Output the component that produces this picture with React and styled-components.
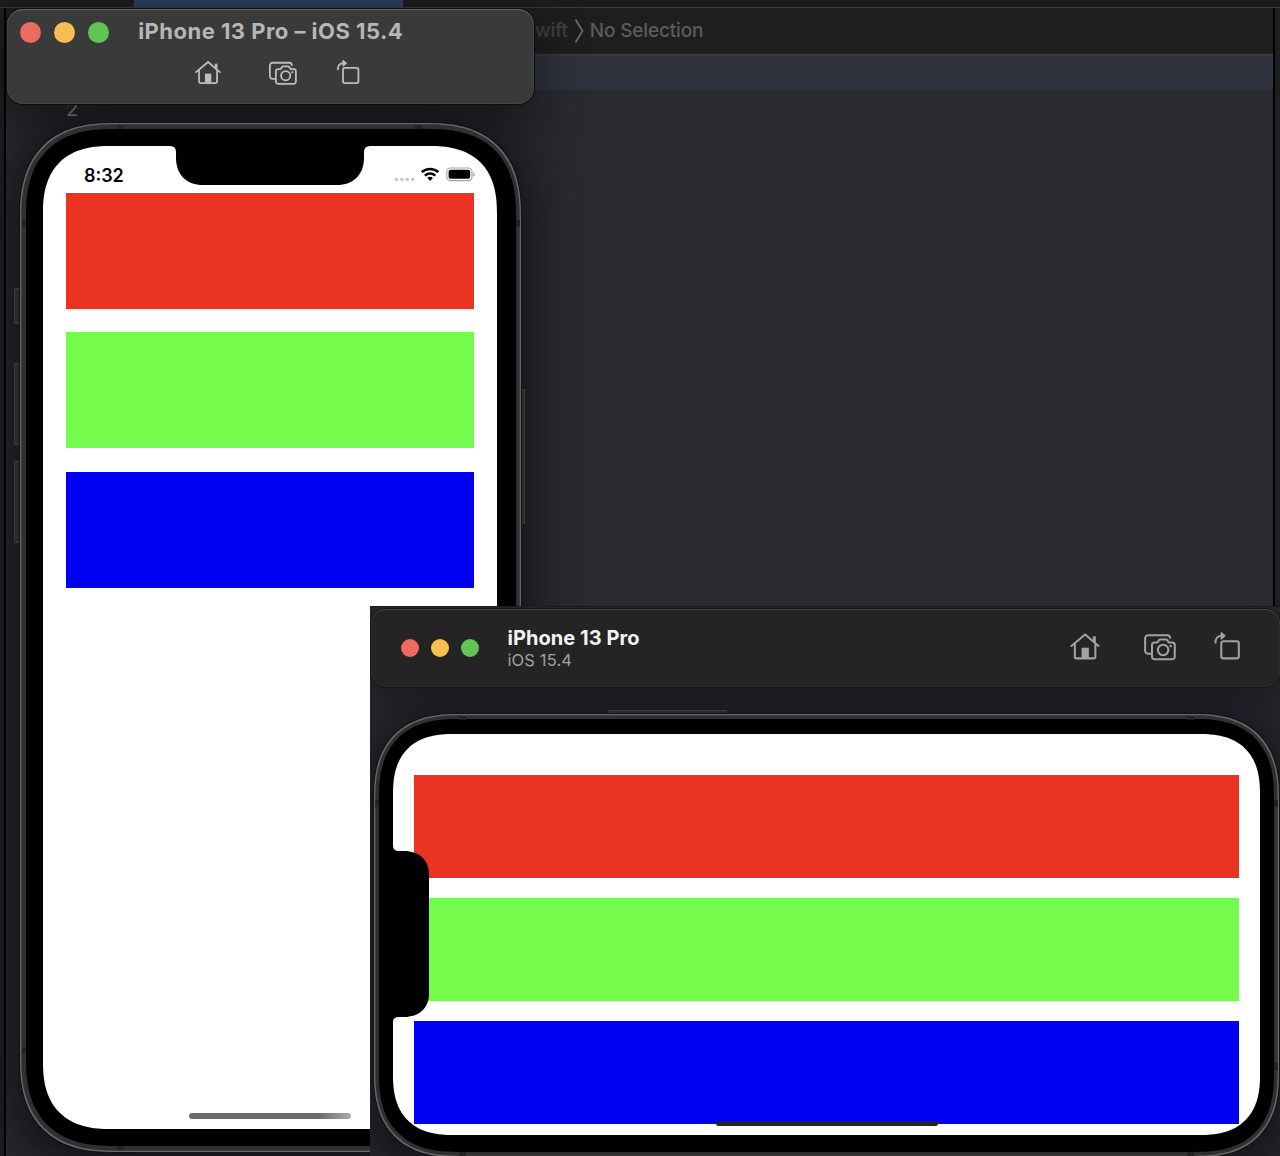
import React from "react";
import styled, { createGlobalStyle, css } from "styled-components";

const GlobalStyle = createGlobalStyle`
  *, *::before, *::after { box-sizing: border-box; }
  body { margin: 0; background: #1e1e1e; font-family: Inter, "Liberation Sans", sans-serif; }
`;

/* Rounded corners with the continuous curvature of a phone body. */
const smoothCorners = css`
  border-radius: ${(p) => p.$radius}px;
  @supports (corner-shape: squircle) {
    border-radius: ${(p) => p.$radius * 1.2}px;
    corner-shape: superellipse(1.3);
  }
`;

const Desktop = styled.main`
  position: relative;
  width: 1280px;
  height: 1156px;
  overflow: hidden;
`;

/* ---------- editor behind the simulators ---------- */

const Editor = styled.section`
  display: grid;
  grid-template-rows: 8px 48px 1fr;
  height: 100%;
`;

const TabStrip = styled.div`
  background: #1c1c1c;
  border-bottom: 1px solid #393939;
  padding-left: 134px;
`;

const ActiveTab = styled.div`
  width: 269px;
  height: 7px;
  background: #2c3e5c;
`;

const Columns = styled.div`
  display: grid;
  grid-template-columns: 4px 1fr 5px;
`;

const Gutter = styled.div`
  background: #1f1f1f;
`;

const JumpBar = styled.div`
  display: flex;
  align-items: flex-start;
  height: 48px;
  padding: 10px 0 0 529px;
  background: #1e1e1e;
  border: solid #000;
  border-width: 0 2px;
  box-shadow: inset 0 -2px #3a3a3a;
  font-size: 19px;
  font-weight: 500;
  line-height: 26px;
`;

const Crumb = styled.span`
  color: ${(p) => (p.$dim ? "#414141" : "#5c5c5c")};
  letter-spacing: -0.17px;
`;

const Separator = styled.svg`
  width: 10px;
  height: 26px;
  margin: 0 6px;
`;

const Code = styled.div`
  display: flex;
  flex-direction: column;
  background: #29292e;
  border: solid #000;
  border-width: 0 2px;
`;

const CurrentLine = styled.div`
  height: 34px;
  background: #2f323c;
`;

const LineNumber = styled.div`
  padding: 7px 0 0 60px;
  color: #a6a6ac;
  font-size: 20px;
  line-height: 24px;
`;

/* ---------- simulator windows ---------- */

const PortraitTitleBar = styled.header`
  position: absolute;
  left: 7px;
  top: 9px;
  width: 527px;
  height: 95px;
  padding: 9px 13.4px 0;
  border-radius: 16px;
  background: #3a3a3b;
  box-shadow: inset 0 1px #626262, inset 0 0 0 1px #434344, 0 0 0 1px #0c0c0d,
    0 16px 44px 4px rgba(8, 8, 14, 0.5);
`;

const TitleRow = styled.div`
  display: flex;
  align-items: center;
  gap: 28.8px;
  height: 27px;
`;

const Lights = styled.div`
  display: flex;
  gap: ${(p) => p.$gap}px;
  padding-top: ${(p) => p.$drop}px;
`;

const Light = styled.i`
  width: ${(p) => p.$size}px;
  height: ${(p) => p.$size}px;
  border-radius: 50%;
  background: ${(p) => p.$color};
`;

const Title = styled.h1`
  margin: 0;
  color: ${(p) => p.$color};
  font-size: ${(p) => p.$size}px;
  font-weight: 700;
  line-height: ${(p) => p.$line}px;
  letter-spacing: ${(p) => p.$track}px;
  white-space: nowrap;
`;

const Subtitle = styled.p`
  margin: 0;
  color: #a0a0a1;
  font-size: 16.5px;
  line-height: 20px;
  letter-spacing: 0.15px;
`;

const Tools = styled.nav`
  display: flex;
  color: ${(p) => p.$color};
  padding: ${(p) => p.$pad};
  gap: ${(p) => p.$gap};
`;

const ToolIcon = styled.svg`
  display: block;
  width: ${(p) => 32 * p.$scale}px;
  height: ${(p) => 28 * p.$scale}px;
  margin-left: ${(p) => p.$shift || 0}px;
  fill: none;
  stroke: currentColor;
  stroke-width: 1.9;
  stroke-linecap: round;
  stroke-linejoin: round;
`;

const placed = css`
  position: absolute;
  left: ${(p) => p.$x}px;
  top: ${(p) => p.$y}px;
  width: ${(p) => p.$w}px;
  height: ${(p) => p.$h}px;
`;

const DeviceShadow = styled.div`
  ${placed}
  border-radius: ${(p) => p.$radius}px;
  box-shadow: 0 10px 44px 14px rgba(8, 8, 14, 0.62);
`;

const Device = styled.article`
  ${placed}
  ${smoothCorners}
  padding: ${(p) => p.$rim}px;
  background: #303032;
  box-shadow: inset 0 0 0 1.3px #666668, 0 0 0 1px #121215;
`;

const Bezel = styled.div`
  ${smoothCorners}
  height: 100%;
  padding: ${(p) => p.$pad};
  background: #000;
`;

const Screen = styled.div`
  ${smoothCorners}
  position: relative;
  display: flex;
  flex-direction: column;
  height: 100%;
  padding: ${(p) => p.$pad};
  background: #fff;
  overflow: hidden;
`;

const StatusBar = styled.div`
  display: flex;
  justify-content: space-between;
  align-items: flex-start;
  height: 47px;
  padding: 18px 0 0 17.5px;
  color: #000;
  font-size: 18px;
  font-weight: 600;
  line-height: 24px;
`;

const StatusIcons = styled.svg`
  width: 82px;
  height: 18px;
  margin: 2px -1.6px 0 0;
`;

const Stack = styled.div`
  display: flex;
  flex-direction: column;
  gap: ${(p) => p.$gap}px;
`;

const Band = styled.div`
  height: ${(p) => p.$h}px;
  background: ${(p) => p.$color};
`;

const Notch = styled.svg`
  ${placed}
`;

const HomeIndicator = styled.div`
  position: absolute;
  left: ${(p) => p.$x}px;
  bottom: ${(p) => p.$bottom}px;
  width: ${(p) => p.$w}px;
  height: ${(p) => p.$h}px;
  border-radius: 3px;
  background: ${(p) => p.$fill};
`;

const SideButton = styled.i`
  ${placed}
  background: #2a2a2c;
  border: solid #3a3a3c;
  border-width: ${(p) => p.$edges};
`;

const AntennaLine = styled.i`
  position: absolute;
  left: ${(p) => p.$x}px;
  top: ${(p) => p.$y}px;
  width: ${(p) => (p.$v ? 4 : 7)}px;
  height: ${(p) => (p.$v ? 7 : 4)}px;
  background: #232324;
`;

const Inset = styled.section`
  position: absolute;
  left: 370px;
  top: 606px;
  width: 910px;
  height: 550px;
  overflow: hidden;
  background: #29292f;
  border-top: 1px solid #1b1b1e;
`;

const LandscapeTitleBar = styled.header`
  display: flex;
  align-items: center;
  position: relative;
  height: 78px;
  margin: 2px 0 0 1px;
  padding: 0 35px 0 30px;
  border-radius: 15px;
  background: #242425;
  box-shadow: inset 0 1px #464648, inset 0 0 0 1px #2b2b2d, 0 0 0 1px #141416,
    0 10px 36px 4px rgba(8, 8, 14, 0.4);
`;

const TitleGroup = styled.div`
  flex: 1;
  margin-left: 28.4px;
`;

function HomeIcon({ scale }) {
  return (
    <ToolIcon $scale={scale} viewBox="0 0 32 28">
      <path d="M3.2 14 16 3.2 28.6 14" />
      <path d="M6.4 12.5V24a1.6 1.6 0 0 0 1.6 1.6h16a1.6 1.6 0 0 0 1.6-1.6V12.5" />
      <path d="M24.6 10.4V5" strokeWidth="2.8" strokeLinecap="butt" />
      <path d="M12.7 15.6h6.8v9.6h-6.8z" fill="currentColor" stroke="none" />
    </ToolIcon>
  );
}

function CameraIcon({ scale, shift }) {
  return (
    <ToolIcon $shift={shift} $scale={scale} viewBox="0 0 32 28">
      <path d="M7.500 21.200H4.800a2.800 2.800 0 0 1-2.800-2.800V6.800A2.800 2.800 0 0 1 4.800 4h18a2.800 2.800 0 0 1 2.600 2.400" />
      <path d="M10.800 10.800h2.600l1.500-2.200a1.800 1.800 0 0 1 1.400-.7h5a1.800 1.800 0 0 1 1.400.7l1.500 2.200h3.100a2.400 2.400 0 0 1 2.400 2.400V24a2.400 2.400 0 0 1-2.400 2.400H10.800A2.400 2.400 0 0 1 8.400 24V13.200a2.400 2.400 0 0 1 2.400-2.400z" />
      <circle cx="18.800" cy="17.800" r="4.900" />
      <circle cx="25.900" cy="14" r="1.200" fill="currentColor" stroke="none" />
    </ToolIcon>
  );
}

function RotateIcon({ scale, shift }) {
  return (
    <ToolIcon $shift={shift} $scale={scale} viewBox="0 0 32 28">
      <rect x="9.600" y="9.500" width="16.400" height="16.100" rx="2" />
      <path d="M4.200 11C4 7.200 6 4.700 9.800 4.500" />
      <path d="M9.600 1.600 13 4.500 9.600 7.400z" fill="currentColor" strokeWidth="1.200" />
    </ToolIcon>
  );
}

const bandColors = ["#ea3323", "#75fb4c", "#0000f5"];
const lightColors = ["#ec6a5e", "#f4bf4f", "#61c454"];

function TrafficLights({ size, gap, drop }) {
  return (
    <Lights $gap={gap} $drop={drop}>
      {lightColors.map((c) => (
        <Light key={c} $size={size} $color={c} />
      ))}
    </Lights>
  );
}

function Bands({ height, gap }) {
  return (
    <Stack $gap={gap}>
      {bandColors.map((c) => (
        <Band key={c} $h={height} $color={c} />
      ))}
    </Stack>
  );
}

function PortraitSimulator() {
  return (
    <>
      <DeviceShadow $x={20} $y={123} $w={501} $h={1029} $radius={78} />
      <PortraitTitleBar>
        <TitleRow>
          <TrafficLights size={21} gap={13} drop={2} />
          <Title $color="#b6b6b7" $size={22} $line={27} $track={0.47}>
            iPhone 13 Pro – iOS 15.4
          </Title>
        </TitleRow>
        <Tools $color="#bdbdbd" $pad="14.4px 0 0 172.8px" $gap="45px">
          <HomeIcon scale={0.94} />
          <CameraIcon scale={0.94} />
          <RotateIcon scale={0.94} shift={-9} />
        </Tools>
      </PortraitTitleBar>
      <SideButton $x={14} $y={288} $w={7} $h={36} $edges="1px 0 1px 1px" />
      <SideButton $x={14} $y={363} $w={7} $h={82} $edges="1px 0 1px 1px" />
      <SideButton $x={14} $y={461} $w={7} $h={82} $edges="1px 0 1px 1px" />
      <SideButton $x={521} $y={389} $w={4} $h={135} $edges="1px 1px 1px 0" />
      <Device $x={20.4} $y={123} $w={501} $h={1029} $rim={5.6} $radius={78}>
        <Bezel $pad="17.4px 19px 17.4px 17.4px" $radius={72}>
          <Screen $pad="0 23px" $radius={56}>
            <StatusBar>
              <span>8:32</span>
              <StatusIcons viewBox="0 0 82 18">
                <g fill="#c9c9cb">
                  <circle cx="3.500" cy="13.500" r="1.800" />
                  <circle cx="8.900" cy="13.500" r="1.800" />
                  <circle cx="14.300" cy="13.500" r="1.800" />
                  <circle cx="19.700" cy="13.500" r="1.800" />
                </g>
                <g fill="none" stroke="#000" strokeWidth="2.500">
                  <path d="M28.800 6.200a12.200 12.200 0 0 1 16.600 0" />
                  <path d="M31.900 9.600a7.700 7.700 0 0 1 10.400 0" />
                </g>
                <path d="M37.100 14.900 34.300 12a4 4 0 0 1 5.600 0z" />
                <rect x="53.800" y="2" width="25.200" height="12.600" rx="3.600" fill="none" stroke="#a3a3a3" strokeWidth="1.100" />
                <rect x="55.600" y="3.800" width="21.600" height="9" rx="2" />
                <path d="M80.200 6.500v4q1.500-.5 1.500-2t-1.500-2z" fill="#a3a3a3" />
              </StatusIcons>
            </StatusBar>
            <Bands height={116} gap={23.4} />
            <Notch $x={126.8} $y={-1} $w={200} $h={41} viewBox="0 0 200 41">
              <path d="M0 0v1q6 0 6 6v6c0 17 11 27 27 27h134c16 0 27-10 27-27V7q0-6 6-6V0z" />
            </Notch>
            <HomeIndicator $x={146} $bottom={10} $w={162} $h={6} $fill="linear-gradient(90deg, #6c6c6c 80%, #aaa)" />
          </Screen>
        </Bezel>
        <AntennaLine $x={97} $y={2} />
        <AntennaLine $x={395} $y={2} />
        <AntennaLine $x={97} $y={1023} />
        <AntennaLine $v $x={1.5} $y={97} />
        <AntennaLine $v $x={495.5} $y={97} />
        <AntennaLine $v $x={1.5} $y={924} />
      </Device>
    </>
  );
}

function LandscapeSimulator() {
  return (
    <Inset>
      <DeviceShadow $x={3.5} $y={106.5} $w={905.5} $h={443} $radius={70} />
      <LandscapeTitleBar>
        <TrafficLights size={18} gap={12} drop={0} />
        <TitleGroup>
          <Title $color="#f2f2f2" $size={20} $line={24} $track={0.07}>
            iPhone 13 Pro
          </Title>
          <Subtitle>iOS 15.4</Subtitle>
        </TitleGroup>
        <Tools $color="#a2a2a3" $pad="0 0 4px" $gap="41px">
          <HomeIcon scale={1.07} />
          <CameraIcon scale={1.07} shift={-1} />
          <RotateIcon scale={1.07} shift={-7} />
        </Tools>
      </LandscapeTitleBar>
      <SideButton $x={238} $y={103} $w={119} $h={4} $edges="1px 1px 0" />
      <Device $x={3.5} $y={106.5} $w={905.5} $h={443} $rim={5} $radius={70}>
        <Bezel $pad="15.5px 14.5px 17px" $radius={65}>
          <Screen $pad="41px 21px 0" $radius={50}>
            <Bands height={102.5} gap={20.5} />
            <Notch $x={-1} $y={112} $w={37} $h={176} viewBox="-1 0 37 176">
              <path d="M-1 0h1q0 5 6 5h5c15 0 25 9 25 23v120c0 14-10 23-25 23H6q-6 0-6 5h-1z" />
            </Notch>
            <HomeIndicator $x={323} $bottom={8.5} $w={222} $h={5} $fill="#232326" />
          </Screen>
        </Bezel>
        <AntennaLine $x={85} $y={2} />
        <AntennaLine $x={813} $y={2} />
        <AntennaLine $x={85} $y={438} />
        <AntennaLine $x={813} $y={438} />
        <AntennaLine $v $x={1.5} $y={86} />
        <AntennaLine $v $x={900.5} $y={86} />
        <AntennaLine $v $x={900.5} $y={349} />
      </Device>
    </Inset>
  );
}

export default function App() {
  return (
    <>
      <GlobalStyle />
      <Desktop>
        <Editor>
          <TabStrip>
            <ActiveTab />
          </TabStrip>
          <Columns>
            <Gutter />
            <JumpBar>
              <Crumb $dim>wift</Crumb>
              <Separator viewBox="0 0 10 26" fill="none" stroke="#6a6a6a" strokeWidth="1.800">
                <path d="M1.500 1.500 8.500 13 1.500 24.500" />
              </Separator>
              <Crumb>No Selection</Crumb>
            </JumpBar>
            <Gutter />
          </Columns>
          <Columns>
            <Gutter />
            <Code>
              <CurrentLine />
              <LineNumber>2</LineNumber>
            </Code>
            <Gutter />
          </Columns>
        </Editor>
        <PortraitSimulator />
        <LandscapeSimulator />
      </Desktop>
    </>
  );
}
